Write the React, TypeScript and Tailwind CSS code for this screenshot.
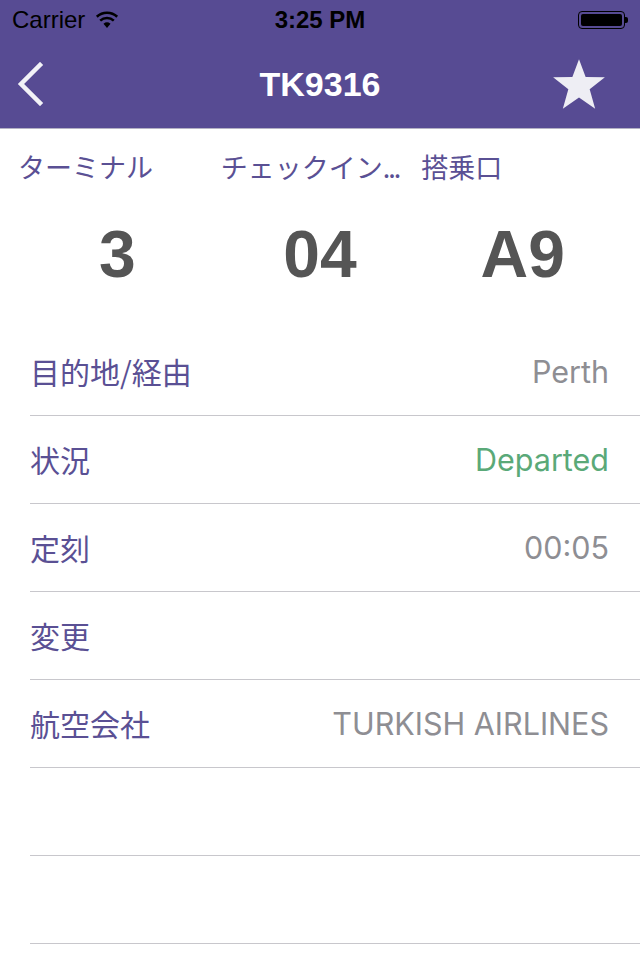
import React from "react";

const rows: { label: string; value: string; color?: string }[] = [
  { label: "目的地/経由", value: "Perth" },
  { label: "状況", value: "Departed", color: "text-[#5aa978]" },
  { label: "定刻", value: "00:05" },
  { label: "変更", value: "" },
  { label: "航空会社", value: "TURKISH AIRLINES" },
  { label: "", value: "" },
  { label: "", value: "" },
];

const cjk = { fontFamily: '"Noto Sans CJK JP", "Liberation Sans", sans-serif' };
const latin = { fontFamily: 'Inter, "Liberation Sans", sans-serif' };

export default function App() {
  return (
    <div className="w-[640px] h-[960px] bg-white overflow-hidden" style={latin}>
      <div className="bg-[#574b93] border-b border-[#b4b1c4]">
        {/* status bar */}
        <div className="h-[40px] flex items-center justify-between px-[12px] relative text-black">
          <div className="flex items-center gap-[10px]">
            <span className="text-[24px] leading-none" style={{ fontFamily: '"Liberation Sans", sans-serif' }}>Carrier</span>
            <svg width="24" height="18" viewBox="0 0 24 18">
              <path d="M12 17 L8.5 12.8 A5.5 5.5 0 0 1 15.5 12.8 Z" fill="#000" />
              <path d="M5.2 9.6 A10 10 0 0 1 18.8 9.6" stroke="#000" strokeWidth="2.6" fill="none" />
              <path d="M1.8 5.8 A15 15 0 0 1 22.2 5.8" stroke="#000" strokeWidth="2.6" fill="none" />
            </svg>
          </div>
          <span className="absolute left-0 right-0 text-center text-[24px] font-semibold leading-none pointer-events-none" style={{ fontFamily: '"Liberation Sans", sans-serif' }}>3:25 PM</span>
          <div className="flex items-center">
            <div className="w-[47px] h-[18px] rounded-[4px] border-[1.5px] border-black p-[2px]">
              <div className="w-full h-full bg-black rounded-[2px]" />
            </div>
            <div className="w-[3px] h-[6px] bg-black rounded-r-[2px]" />
          </div>
        </div>
        {/* nav bar */}
        <div className="h-[88px] flex items-center justify-between relative px-[14px]">
          <svg width="32" height="44" viewBox="0 0 32 44">
            <path d="M26 3 L7 22 L26 41" stroke="#f2f2f7" strokeWidth="4.5" fill="none" strokeLinecap="square" />
          </svg>
          <span className="absolute left-0 right-0 text-center text-white text-[34px] font-bold leading-none pointer-events-none" style={{ fontFamily: '"Liberation Sans", sans-serif' }}>TK9316</span>
          <svg width="58" height="54" viewBox="0 0 56 52" className="mr-[18px]">
            <polygon
              points="28,2 34.4,19.3 53,19.6 38.3,31 43.6,50 28,39 12.4,50 17.7,31 3,19.6 21.6,19.3"
              fill="#eeeef4"
            />
          </svg>
        </div>
      </div>

      {/* terminal/checkin/gate */}
      <div className="px-[16px] pt-[21px]">
        <div className="grid grid-cols-3 text-[#5a5094] text-[27px] leading-[34px]" style={cjk}>
          <div className="pl-[2px] whitespace-nowrap">ターミナル</div>
          <div className="pl-[2px] whitespace-nowrap">チェックイン<span className="tracking-[-2px]">...</span></div>
          <div className="whitespace-nowrap">搭乗口</div>
        </div>
        <div className="grid grid-cols-3 mt-[30px] text-[#555555] text-[66px] font-bold leading-[80px] text-center" style={{ fontFamily: '"Liberation Sans", sans-serif' }}>
          <div>3</div>
          <div>04</div>
          <div>A9</div>
        </div>
      </div>

      {/* rows */}
      <div className="mt-[34px] pl-[30px]">
        {rows.map((r, i) => (
          <div key={i} className="h-[88px] flex items-center justify-between pr-[31px] border-b border-[#c8c7cc]">
            <span className="text-[#5a5094] text-[30px]" style={cjk}>{r.label}</span>
            <span className={`text-[30.5px] ${r.color ?? "text-[#8e8e93]"}`}>{r.value}</span>
          </div>
        ))}
      </div>
    </div>
  );
}
